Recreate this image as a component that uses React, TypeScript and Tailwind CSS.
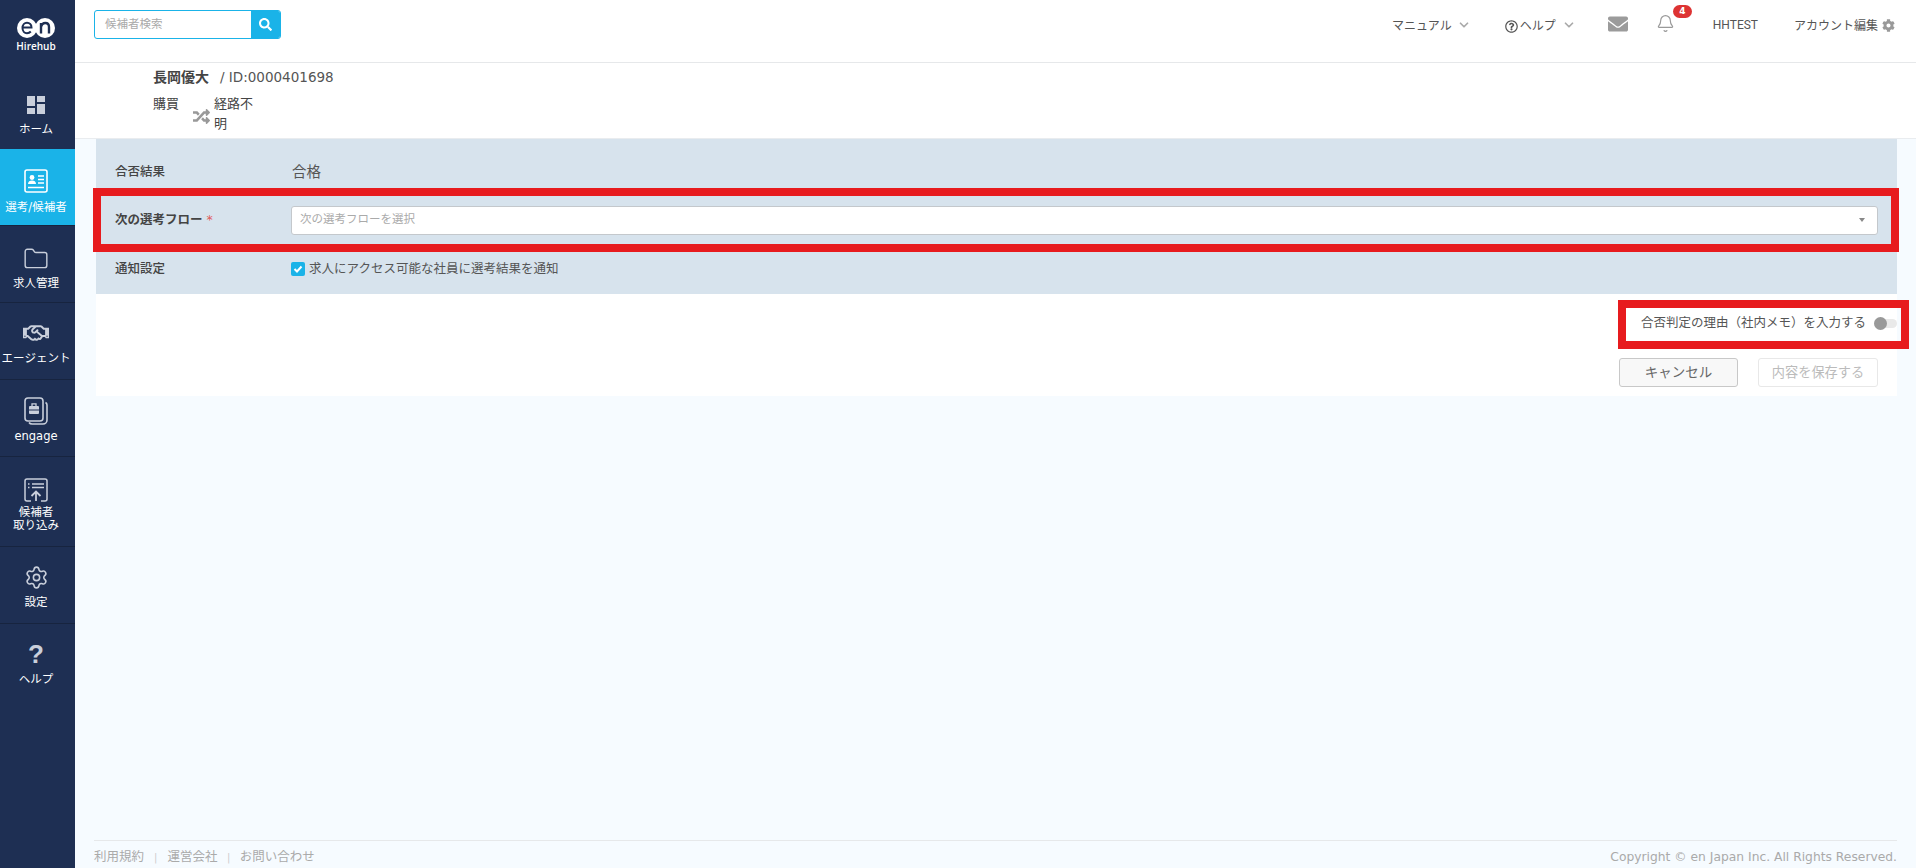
import type { ReactNode } from "react";
import { Bell, ChevronDown, Folder, Settings } from "lucide-react";
import { FaCog, FaEnvelope, FaRandom, FaRegHandshake, FaRegQuestionCircle, FaSearch } from "react-icons/fa";

const FONT = "font-['DejaVu_Sans','Noto_Sans_CJK_JP',sans-serif]";

function HomeIcon() {
  return (
    <svg width="20" height="20" viewBox="0 0 20 20" fill="#c9cfdb">
      <rect x="1" y="1" width="8" height="10" />
      <rect x="11" y="1" width="8" height="6" />
      <rect x="1" y="13" width="8" height="6" />
      <rect x="11" y="9" width="8" height="10" />
    </svg>
  );
}

function CandidateIcon() {
  return (
    <svg width="24" height="24" viewBox="0 0 24 24" fill="none" stroke="#fff" strokeWidth="1.6">
      <rect x="1" y="1" width="22" height="22" rx="2" />
      <circle cx="8" cy="8.5" r="2.4" fill="#fff" stroke="none" />
      <path d="M4 15c0-2.6 1.8-3.6 4-3.6s4 1 4 3.6z" fill="#fff" stroke="none" />
      <path d="M14 7h6M14 10.5h6M14 14h6M4 18.5h16" strokeWidth="1.4" />
    </svg>
  );
}

function EngageIcon() {
  return (
    <svg width="24" height="28" viewBox="0 0 24 28" fill="none" stroke="#c9cfdb" strokeWidth="1.6">
      <rect x="1" y="1" width="18" height="23" rx="3" />
      <path d="M21.5 5.5c1 .5 1.500 1.300 1.500 2.500v15c0 2-1.500 4-4 4H8c-1.300 0-2.300-.5-3-1.500" />
      <rect x="5" y="9" width="10" height="8" rx="1" fill="#c9cfdb" stroke="none" />
      <path d="M8 9V6.800h4V9" strokeWidth="1.300" />
      <path d="M5 13h10" stroke="#1e2f53" strokeWidth="1" />
    </svg>
  );
}

function ImportIcon() {
  return (
    <svg width="24" height="24" viewBox="0 0 24 24" fill="none" stroke="#c9cfdb" strokeWidth="1.500">
      <path d="M7 23H3a2 2 0 0 1-2-2V3a2 2 0 0 1 2-2h18a2 2 0 0 1 2 2v18a2 2 0 0 1-2 2h-4" />
      <path d="M4 6h1.500M8 6h12M4 9.500h1.500M8 9.500h12" />
      <path d="M12 23V13.500M7.500 18l4.500-4.500 4.500 4.500" strokeWidth="1.800" />
    </svg>
  );
}

function NavItem({
  icon,
  label,
  active,
  className,
  labelClass,
}: {
  icon: ReactNode;
  label: ReactNode;
  active?: boolean;
  className: string;
  labelClass: string;
}) {
  return (
    <div
      className={`flex flex-col items-center border-b border-[#17243f] pr-[3px] text-center text-[11.5px] leading-[13px] text-white ${
        active ? "bg-[#1ab3e8]" : ""
      } ${className}`}
    >
      <div className="flex h-[28px] items-center justify-center">{icon}</div>
      <div className={labelClass}>{label}</div>
    </div>
  );
}

function Sidebar() {
  return (
    <aside className="flex w-[75px] shrink-0 flex-col bg-[#1e2f53]">
      <div className="flex h-[87px] flex-col items-center pt-[18px] pr-[3px] text-white">
        <svg width="38" height="20" viewBox="0 0 38 20">
          <circle cx="28" cy="10" r="10" fill="#fff" />
          <circle cx="10" cy="10" r="10" fill="#fff" />
          <path d="M5.500 9.500h9c0-3-2-4.800-4.500-4.800S5.500 6.800 5.500 10s2 5.200 4.500 5.200c1.500 0 2.800-.6 3.800-1.700" fill="none" stroke="#1e2f53" strokeWidth="2" />
          <path d="M24 15.500V5M24 9c.6-2.500 2.300-4 4.300-4S32 6.500 32 9v6.500" fill="none" stroke="#1e2f53" strokeWidth="2.400" />
        </svg>
        <span className="mt-[1px] font-['Open_Sans',sans-serif] text-[10px] leading-[14px] font-semibold">Hirehub</span>
      </div>
      <NavItem className="h-[62px] border-b-0 pt-[4px]" labelClass="mt-[3.500px]" icon={<HomeIcon />} label="ホーム" />
      <NavItem className="h-[77px] pt-[18px]" labelClass="mt-[6px]" active icon={<CandidateIcon />} label="選考/候補者" />
      <NavItem className="h-[77px] pt-[19px]" labelClass="mt-[3.500px]" icon={<Folder size={26} strokeWidth={1.300} color="#c9cfdb" />} label="求人管理" />
      <NavItem className="h-[77px] pt-[16px]" labelClass="mt-[4.500px]" icon={<FaRegHandshake size={26} color="#c9cfdb" />} label="エージェント" />
      <NavItem className="h-[77px] pt-[17px]" labelClass="mt-[5px]" icon={<EngageIcon />} label="engage" />
      <NavItem
        className="h-[90px] pt-[19px]"
        labelClass="mt-[2px]"
        icon={<ImportIcon />}
        label={
          <>
            候補者
            <br />
            取り込み
          </>
        }
      />
      <NavItem className="h-[77px] pt-[16.500px]" labelClass="mt-[4.500px]" icon={<Settings size={25} strokeWidth={1.500} color="#c9cfdb" />} label="設定" />
      <div className="flex flex-col items-center pt-[14.500px] pr-[3px] text-[11.5px] leading-[13px] text-white">
        <span className="font-['Liberation_Sans',sans-serif] text-[26px] leading-[30px] font-bold text-[#c9cfdb]">?</span>
        <span className="mt-[4.500px]">ヘルプ</span>
      </div>
    </aside>
  );
}

function Header() {
  return (
    <header className="flex h-[63px] items-start justify-between border-b border-[#e6e8ea] bg-white pr-[21px] pl-[19px] text-[12px] text-[#555]">
      <div className="mt-[10px] flex h-[29px] w-[187px] rounded-[3px] border border-[#1ab3e8]">
        <div className="flex-1 pl-[10px] text-[11.5px] leading-[26px] text-[#aaa]">候補者検索</div>
        <div className="flex w-[29px] items-center justify-center rounded-r-[2px] bg-[#1ab3e8]">
          <FaSearch size={13} color="#fff" />
        </div>
      </div>
      <div className="flex h-[50px] items-center">
        <span className="font-['Noto_Sans_CJK_JP',sans-serif]">マニュアル</span>
        <ChevronDown size={14} strokeWidth={3} color="#aaa" className="ml-[5px]" />
        <FaRegQuestionCircle size={13} color="#555" className="mt-[2px] ml-[34px]" />
        <span className="ml-[2px] font-['Noto_Sans_CJK_JP',sans-serif]">ヘルプ</span>
        <ChevronDown size={14} strokeWidth={3} color="#aaa" className="ml-[6px]" />
        <FaEnvelope size={20} color="#9b9b9b" className="mb-[3px] ml-[32px]" />
        <div className="relative mb-[3px] ml-[28px]">
          <Bell size={19} strokeWidth={1.500} color="#999" />
          <span className="absolute -top-[9px] left-[17px] flex h-[13px] w-[19px] items-center justify-center rounded-full bg-[#dd3333] text-[9px] font-bold text-white">4</span>
        </div>
        <span className="ml-[38px] font-['Roboto',sans-serif]">HHTEST</span>
        <span className="ml-[36px] font-['Noto_Sans_CJK_JP',sans-serif]">アカウント編集</span>
        <FaCog size={13} color="#999" className="ml-[4px]" />
      </div>
    </header>
  );
}

function Row({ label, bold, className, children }: { label: ReactNode; bold?: boolean; className: string; children: ReactNode }) {
  return (
    <div className={`flex items-center pl-[19px] ${className}`}>
      <div className={`w-[176px] pt-[1px] text-[12.5px] text-[#444] ${bold ? "font-bold" : "font-medium"}`}>{label}</div>
      <div className="flex-1">{children}</div>
    </div>
  );
}

function FormPanel() {
  return (
    <section className="relative mr-[19px] ml-[21px] text-[#444]">
      <div className="bg-[#d7e3ed] pr-[19px]">
        <Row label="合否結果" className="h-[57px] pt-[9px]">
          <span className="ml-[1px] text-[14.5px] text-[#555]">合格</span>
        </Row>
        <Row
          label={
            <>
              次の選考フロー<span className="ml-[4px] font-normal text-[#e05a5a]">*</span>
            </>
          }
          bold
          className="h-[48px]"
        >
          <div className="flex h-[29px] items-center justify-between rounded-[3px] border border-[#c4c8cc] bg-white pr-[12px] pl-[8px] text-[11.5px] text-[#aaa]">
            次の選考フローを選択
            <span className="h-0 w-0 border-x-[3.500px] border-t-[4px] border-x-transparent border-t-[#888]" />
          </div>
        </Row>
        <Row label="通知設定" className="h-[50px]">
          <div className="flex items-center text-[12.5px] text-[#555]">
            <span className="flex h-[14px] w-[14px] items-center justify-center rounded-[2px] bg-[#1ab3e8]">
              <svg width="10" height="10" viewBox="0 0 10 10" fill="none" stroke="#fff" strokeWidth="2">
                <path d="M1.500 5l2.500 2.500L8.500 2.500" />
              </svg>
            </span>
            <span className="ml-[4px]">求人にアクセス可能な社員に選考結果を通知</span>
          </div>
        </Row>
      </div>
      <div className="h-[102px] bg-white pr-[19px]">
        <div className="flex h-[60px] items-center justify-end pb-[2px]">
          <span className="text-[12.5px] text-[#555]">合否判定の理由（社内メモ）を入力する</span>
          <span className="relative -mr-[19px] ml-[8px] h-[9px] w-[23px] rounded-full bg-[#e9e9e9]">
            <span className="absolute -top-[2px] left-0 h-[13px] w-[13px] rounded-full bg-[#999]" />
          </span>
        </div>
        <div className="mt-[4px] flex justify-end gap-[20px]">
          <button className="h-[29px] w-[119px] rounded-[3px] border border-[#c8c8c8] bg-[#f8f8f8] text-[13.5px] text-[#666]">キャンセル</button>
          <button className="h-[29px] w-[120px] rounded-[3px] border border-[#e8e8e8] bg-white text-[13.2px] text-[#bbb]">内容を保存する</button>
        </div>
      </div>
      {/* red annotation frames drawn over the form */}
      <div className="absolute top-[49px] -right-[2px] -left-[3px] h-[64px] border-[8px] border-[#e71b1e]" />
      <div className="absolute top-[161px] -right-[12px] h-[49px] w-[291px] border-[8px] border-[#e71b1e]" />
    </section>
  );
}

export default function App() {
  return (
    <div className={`flex h-[868px] overflow-hidden bg-[#f6fbff] ${FONT}`}>
      <Sidebar />
      <main className="flex min-w-0 flex-1 flex-col">
        <Header />
        <div className="h-[76px] border-b border-[#e9ecef] bg-white pl-[78px] text-[13px] text-[#444]">
          <div className="flex h-[29px] items-center">
            <span className="text-[14px] font-bold">長岡優大</span>
            <span className="ml-[11px] text-[13.500px] text-[#555]">/ ID:0000401698</span>
          </div>
          <div className="flex">
            <span className="leading-[24px]">購買</span>
            <FaRandom size={17} color="#999" className="mt-[16px] ml-[14px]" />
            <span className="ml-[4px] w-[42px] pt-[2px] leading-[20px]">経路不明</span>
          </div>
        </div>
        <FormPanel />
        <footer className="mx-[19px] mt-auto flex h-[28px] items-center justify-between border-t border-[#e6e8ea] pt-[5px] text-[12.5px] text-[#aaa]">
          <div className="flex items-center">
            <span>利用規約</span>
            <span className="mx-[10px] text-[10px] text-[#ccc]">|</span>
            <span>運営会社</span>
            <span className="mx-[9.500px] text-[10px] text-[#ccc]">|</span>
            <span>お問い合わせ</span>
          </div>
          <span className="text-[12.300px]">Copyright © en Japan Inc. All Rights Reserved.</span>
        </footer>
      </main>
    </div>
  );
}
